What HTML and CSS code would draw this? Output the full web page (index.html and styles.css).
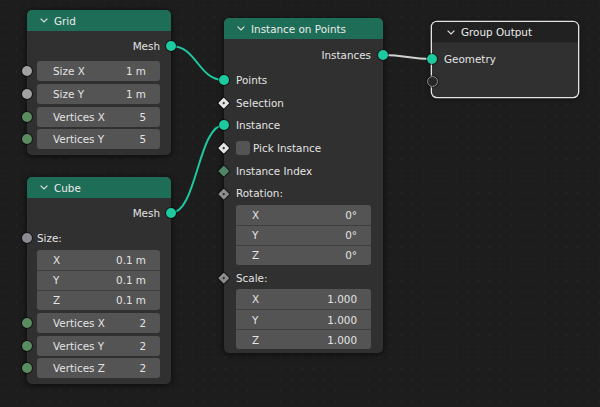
FILE: index.html
```html
<!DOCTYPE html>
<html>
<head>
<meta charset="utf-8">
<link rel="stylesheet" href="styles.css">
</head>
<body>
<div class="editor">
  <svg class="links" width="600" height="407" viewBox="0 0 600 407">
    <path class="link" d="M171 46 C197 46, 198 80, 224 80"/>
    <path class="link" d="M171 213 C197 213, 198 125, 224 125"/>
    <path class="link sel" d="M383 55 C407 55, 408 59, 432 59"/>
  </svg>

  <div class="node n-grid">
    <div class="header"><svg class="chev" width="8" height="5" viewBox="0 0 8 5"><path d="M0.6 0.6 L4 4 L7.4 0.6"/></svg>Grid</div>
    <div class="body">
      <div class="row out"><span>Mesh</span><i class="sock r geo"></i></div>
      <div class="row"><i class="sock l flt"></i><div class="field"><span>Size X</span><span>1 m</span></div></div>
      <div class="row"><i class="sock l flt"></i><div class="field"><span>Size Y</span><span>1 m</span></div></div>
      <div class="row"><i class="sock l int"></i><div class="field"><span>Vertices X</span><span>5</span></div></div>
      <div class="row"><i class="sock l int"></i><div class="field"><span>Vertices Y</span><span>5</span></div></div>
    </div>
  </div>

  <div class="node n-cube">
    <div class="header"><svg class="chev" width="8" height="5" viewBox="0 0 8 5"><path d="M0.6 0.6 L4 4 L7.4 0.6"/></svg>Cube</div>
    <div class="body">
      <div class="row out"><span>Mesh</span><i class="sock r geo"></i></div>
      <div class="row"><i class="sock l vec"></i><span>Size:</span></div>
      <div class="box">
        <div class="cell"><span>X</span><span>0.1 m</span></div>
        <div class="cell"><span>Y</span><span>0.1 m</span></div>
        <div class="cell"><span>Z</span><span>0.1 m</span></div>
      </div>
      <div class="row after-box"><i class="sock l int"></i><div class="field"><span>Vertices X</span><span>2</span></div></div>
      <div class="row"><i class="sock l int"></i><div class="field"><span>Vertices Y</span><span>2</span></div></div>
      <div class="row"><i class="sock l int"></i><div class="field"><span>Vertices Z</span><span>2</span></div></div>
    </div>
  </div>

  <div class="node n-inst">
    <div class="header"><svg class="chev" width="8" height="5" viewBox="0 0 8 5"><path d="M0.6 0.6 L4 4 L7.4 0.6"/></svg>Instance on Points</div>
    <div class="body">
      <div class="row out"><span>Instances</span><i class="sock r geo"></i></div>
      <div class="row"><i class="sock l geo"></i><span>Points</span></div>
      <div class="row"><i class="sock l dia white dot"></i><span>Selection</span></div>
      <div class="row"><i class="sock l geo"></i><span>Instance</span></div>
      <div class="row"><i class="sock l dia white dot"></i><span class="check"></span><span>Pick Instance</span></div>
      <div class="row"><i class="sock l dia green"></i><span>Instance Index</span></div>
      <div class="row"><i class="sock l dia grey dot"></i><span>Rotation:</span></div>
      <div class="box">
        <div class="cell"><span>X</span><span>0°</span></div>
        <div class="cell"><span>Y</span><span>0°</span></div>
        <div class="cell"><span>Z</span><span>0°</span></div>
      </div>
      <div class="row after-box"><i class="sock l dia grey dot"></i><span>Scale:</span></div>
      <div class="box">
        <div class="cell"><span>X</span><span>1.000</span></div>
        <div class="cell"><span>Y</span><span>1.000</span></div>
        <div class="cell"><span>Z</span><span>1.000</span></div>
      </div>
    </div>
  </div>

  <div class="node n-out selected">
    <div class="header dark"><svg class="chev" width="8" height="5" viewBox="0 0 8 5"><path d="M0.6 0.6 L4 4 L7.4 0.6"/></svg>Group Output</div>
    <div class="body">
      <div class="row"><i class="sock l geo"></i><span>Geometry</span></div>
      <div class="row"><i class="sock l empty"></i></div>
    </div>
  </div>
</div>
</body>
</html>
```
FILE: styles.css
```css
html, body {
  margin: 0;
  padding: 0;
  background: #1d1d1d;
}
body {
  font-family: "DejaVu Sans", sans-serif;
  font-size: 10.4px;
  color: #e3e3e3;
}
.editor {
  position: relative;
  width: 600px;
  height: 407px;
  overflow: hidden;
  background-color: #1d1d1d;
  background-image: radial-gradient(circle, #262626 0.8px, transparent 1.1px);
  background-size: 11px 11px;
}
.links {
  position: absolute;
  left: 0;
  top: 0;
}
.link {
  fill: none;
  stroke: #1dc99f;
  stroke-width: 2;
}
.link.sel {
  stroke: #d2d2d2;
}
.node {
  position: absolute;
  background: #303030;
  border-radius: 5px;
  box-shadow: 0 1px 6px rgba(0, 0, 0, 0.65);
}
.n-grid { left: 27px; top: 10px; width: 144px; }
.n-cube { left: 27px; top: 177px; width: 144px; }
.n-inst { left: 224px; top: 18px; width: 159px; }
.n-out { left: 432px; top: 22px; width: 146px; }
.node.selected {
  box-shadow: 0 0 0 1.3px #e4e4e4, 0 1px 6px rgba(0, 0, 0, 0.65);
}
.header {
  height: 21px;
  background: #1e6e57;
  border-radius: 5px 5px 0 0;
  display: flex;
  align-items: center;
  gap: 6px;
  padding-left: 13px;
  color: #ebebeb;
}
.header.dark {
  background: #212121;
  border-bottom: 1px solid #2a2a2a;
  height: 20px;
  padding-left: 15px;
}
.chev path {
  fill: none;
  stroke: #dedede;
  stroke-width: 1.2;
}
.body {
  padding: 4px 0 4px;
}
.n-inst .body, .n-out .body {
  padding-top: 4.67px;
}
.row {
  position: relative;
  height: 22.67px;
  display: flex;
  align-items: center;
  padding: 0 11px 0 10px;
  white-space: nowrap;
}
.n-inst .row { padding: 0 12px; }
.n-out .row { padding: 0 12px; }
.row.out {
  justify-content: flex-end;
}
.row.out + .row {
  margin-top: 2.5px;
}
.row.after-box {
  margin-top: 2px;
}
.field {
  flex: 1;
  height: 20px;
  background: #545454;
  border-radius: 3px;
  display: flex;
  align-items: center;
  justify-content: space-between;
  padding: 0 14px 0 16px;
}
.box {
  margin: 0 11px 0 10px;
  background: #545454;
  border-radius: 3px;
  overflow: hidden;
}
.n-inst .box { margin: 0 12px; }
.cell {
  height: 20px;
  box-sizing: border-box;
  display: flex;
  align-items: center;
  justify-content: space-between;
  padding: 0 14px 0 16px;
}
.cell + .cell {
  border-top: 1px solid #3e3e3e;
}
.check {
  width: 14px;
  height: 14px;
  background: #545454;
  border-radius: 3px;
  margin-right: 3px;
}
.sock {
  position: absolute;
  top: 50%;
  width: 10px;
  height: 10px;
  margin-top: -5px;
  border-radius: 50%;
  box-shadow: 0 0 0 1px rgba(0, 0, 0, 0.55);
}
.sock.l { left: -5px; }
.sock.r { right: -5px; }
.geo { background: #1dc99f; }
.flt { background: #a1a1a1; }
.vec { background: #8a8a92; }
.int { background: #5a8c62; }
.dia {
  width: 7.5px;
  height: 7.5px;
  margin-top: -3.75px;
  border-radius: 1px;
  transform: rotate(45deg);
}
.sock.l.dia { left: -3.75px; }
.dia.white { background: #e4e4e4; }
.dia.green { background: #4f8564; }
.dia.grey { background: #8c8c8c; }
.dia.dot::after {
  content: "";
  position: absolute;
  left: 2.5px;
  top: 2.5px;
  width: 2.5px;
  height: 2.5px;
  background: #2a2a2a;
}
.sock.empty {
  width: 11px;
  height: 11px;
  margin-top: -5.5px;
  left: -5.5px;
  background: #272727;
  box-sizing: border-box;
  border: 1.6px solid #8a8a8a;
  box-shadow: 0 0 0 1px rgba(0, 0, 0, 0.4);
}
```
